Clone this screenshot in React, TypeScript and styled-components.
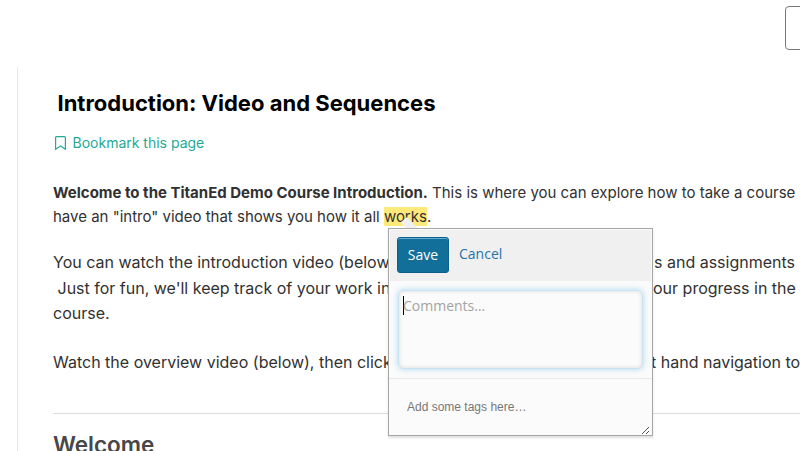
import React from "react";
import styled, { createGlobalStyle } from "styled-components";

const GlobalStyle = createGlobalStyle`
  *, *::before, *::after { box-sizing: border-box; }
  body { margin: 0; background: #fff; overflow: hidden; }
  h1, h2, p { margin: 0; }
`;

const Page = styled.main`
  position: relative;
  width: 800px;
  height: 451px;
  overflow: hidden;
  display: flex;
  flex-direction: column;
  font-family: Inter, sans-serif;
  color: #313131;
`;

const TopBar = styled.header`
  height: 67px;
  flex: none;
  padding: 6px 0 0 785px;
`;

const NavButton = styled.button`
  display: block;
  width: 60px;
  height: 44px;
  padding: 0;
  background: #fff;
  border: 1px solid #777;
  border-radius: 4px;
`;

const Content = styled.article`
  flex: 1;
  margin-left: 17px;
  padding: 23px 0 0 35px;
  border-left: 1px solid #e7e7e7;
`;

const Title = styled.h1`
  padding-left: 4.5px;
  font-size: 22px;
  line-height: 26px;
  font-weight: 700;
  color: #000;
  white-space: nowrap;
`;

const Bookmark = styled.a`
  display: flex;
  align-items: center;
  gap: 6.5px;
  height: 20px;
  margin: 17px 0 0 2px;
  color: #23aa94;
  font-size: 14px;
  line-height: 20px;
`;

const Paragraph = styled.p<{ $size: number; $leading: number; $top: number }>`
  margin-top: ${(p) => p.$top}px;
  font-size: ${(p) => p.$size}px;
  line-height: ${(p) => p.$leading}px;
`;

const Line = styled.span`
  display: flex;
  white-space: pre;
`;

const Lead = styled.span<{ $width: number }>`
  flex: none;
  width: ${(p) => p.$width}px;
`;

const Strong = styled.strong`
  font-weight: 700;
`;

const Highlight = styled.mark`
  background: #ffe97a;
  color: inherit;
  height: 19px;
  line-height: 19px;
  margin-top: 2px;
`;

const Rule = styled.hr`
  height: 1px;
  margin: 38px 0 17px;
  border: 0;
  background: #dcdcdc;
`;

const Heading = styled.h2`
  font-size: 22.5px;
  line-height: 28px;
  font-weight: 600;
  color: #474747;
`;

const Popover = styled.form`
  position: absolute;
  left: 388px;
  top: 228px;
  width: 265px;
  height: 208px;
  display: flex;
  flex-direction: column;
  background: #fbfbfb;
  border: 1px solid #a6a6a6;
  box-shadow: 0 2px 2px rgba(0, 0, 0, 0.12);
  font-family: "Open Sans", sans-serif;
`;

const Pointer = styled.svg`
  position: absolute;
  left: 10px;
  top: -12px;
`;

const Actions = styled.div`
  display: flex;
  align-items: flex-start;
  gap: 10px;
  height: 52px;
  flex: none;
  padding: 7px;
  background: #f0f0f0;
  border: 1px solid #fafafa;
  border-bottom: 0;
`;

const SaveButton = styled.button`
  width: 52px;
  height: 36px;
  padding: 0;
  border: 1px solid #0d5f8b;
  border-radius: 3px;
  background: #126f9a;
  box-shadow: inset 0 1px 0 #5fb0d2;
  color: #fff;
  font: 400 14px/34px "Open Sans", sans-serif;
`;

const CancelLink = styled.a`
  color: #1f74a6;
  font-size: 14px;
  line-height: 34px;
`;

const CommentField = styled.div`
  display: flex;
  height: 79px;
  margin: 9px;
  flex: none;
  padding: 4px;
  border: 1px solid #c9e3f0;
  border-radius: 5px;
  box-shadow: 0 0 6px rgba(110, 185, 225, 0.55), inset 0 0 4px rgba(0, 0, 0, 0.14);
  color: #a3a3a3;
  font-size: 14px;
  line-height: 22px;
`;

const Caret = styled.i`
  width: 1px;
  height: 19px;
  margin: 1px -1px 0 0;
  background: #000;
`;

const Tags = styled.div`
  flex: 1;
  display: flex;
  justify-content: space-between;
  border-top: 1px solid #e9e9e9;
  padding: 0 2px 3px 18px;
  color: #777;
  font: 12px/56px "Liberation Sans", sans-serif;
`;

const Grip = styled.svg`
  align-self: flex-end;
`;

export default function App() {
  return (
    <Page>
      <GlobalStyle />
      <TopBar>
        <NavButton aria-label="Next" />
      </TopBar>
      <Content>
        <Title>Introduction: Video and Sequences</Title>
        <Bookmark>
          <svg width="11" height="14" viewBox="0 0 11 14" fill="none" stroke="currentColor" strokeWidth="1.2">
            <path d="M1.6.6h7.8q1 0 1 1v11.6L5.5 10 .6 13.2V1.6q0-1 1-1Z" />
          </svg>
          Bookmark this page
        </Bookmark>
        <Paragraph $size={15} $leading={24} $top={28}>
          <Line>
            <Strong>Welcome to the TitanEd Demo Course Introduction.</Strong> This is where you can explore how to take a course
          </Line>
          <Line>
            have an "intro" video that shows you how it all <Highlight>works</Highlight>.
          </Line>
        </Paragraph>
        <Paragraph $size={16} $leading={25.5} $top={21}>
          <Line>
            <Lead $width={601}>You can watch the introduction video (below)</Lead>
            s and assignments
          </Line>
          <Line>
            <Lead $width={600}> Just for fun, we'll keep track of your work in</Lead>
            our progress in the
          </Line>
          <Line>course.</Line>
        </Paragraph>
        <Paragraph $size={16} $leading={25} $top={23}>
          <Line>
            <Lead $width={598}>Watch the overview video (below), then click</Lead>
            t hand navigation to
          </Line>
        </Paragraph>
        <Rule />
        <Heading>Welcome</Heading>
      </Content>
      <Popover>
        <Pointer width="22" height="11" viewBox="0 0 22 11">
          <path d="M1.5 5.5 8 0 18.5 11H7Z" fill="#f0f0f0" />
        </Pointer>
        <Actions>
          <SaveButton type="button">Save</SaveButton>
          <CancelLink>Cancel</CancelLink>
        </Actions>
        <CommentField>
          <Caret />
          Comments…
        </CommentField>
        <Tags>
          Add some tags here…
          <Grip width="9" height="9" viewBox="0 0 9 9" stroke="#555" strokeWidth="1">
            <path d="M1 8 8 1M5 8l3-3" />
          </Grip>
        </Tags>
      </Popover>
    </Page>
  );
}
